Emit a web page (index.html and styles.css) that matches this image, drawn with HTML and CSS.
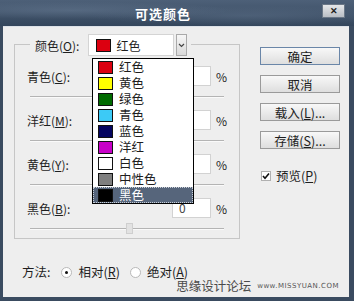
FILE: index.html
```html
<!DOCTYPE html>
<html lang="zh-CN">
<head>
<meta charset="UTF-8">
<title>可选颜色</title>
<link rel="stylesheet" href="styles.css">
</head>
<body>
  <div class="dialog">
    <div class="titlebar">
      <span class="title">可选颜色</span>
      <span class="close">✕</span>
    </div>
    <div class="client">
      <div class="left">
        <div class="group">
          <div class="group-head">
            <span class="head-label">颜色(<u>O</u>):</span>
            <div class="select">
              <span class="swatch red"></span>
              <span>红色</span>
            </div>
            <span class="select-btn">
              <svg width="7" height="5" viewBox="0 0 7 5"><path d="M1 1 L3.5 3.5 L6 1" fill="none" stroke="#444" stroke-width="1.2"/></svg>
            </span>
          </div>
          <div class="rows">
            <div class="row">
              <span class="label">青色(<u>C</u>):</span>
              <span class="field"></span>
              <span class="pct">%</span>
            </div>
            <div class="slider"><span class="thumb"></span></div>
            <div class="row">
              <span class="label">洋红(<u>M</u>):</span>
              <span class="field"></span>
              <span class="pct">%</span>
            </div>
            <div class="slider"><span class="thumb"></span></div>
            <div class="row">
              <span class="label">黄色(<u>Y</u>):</span>
              <span class="field"></span>
              <span class="pct">%</span>
            </div>
            <div class="slider"><span class="thumb"></span></div>
            <div class="row">
              <span class="label">黑色(<u>B</u>):</span>
              <span class="field">0</span>
              <span class="pct">%</span>
            </div>
            <div class="slider last"><span class="thumb"></span></div>
          </div>
        </div>
        <div class="method">
          <span class="method-label">方法:</span>
          <span class="radio checked"></span>
          <span class="radio-text">相对(<u>R</u>)</span>
          <span class="radio"></span>
          <span class="radio-text">绝对(<u>A</u>)</span>
        </div>
      </div>

      <div class="right">
        <div class="btn default">确定</div>
        <div class="btn">取消</div>
        <div class="btn gap">载入(<u>L</u>)...</div>
        <div class="btn">存储(<u>S</u>)...</div>
        <div class="check-row">
          <span class="checkbox">
            <svg width="8" height="8" viewBox="0 0 8 8"><path d="M1 4 L3 6.2 L7 1.5" fill="none" stroke="#111" stroke-width="1.6"/></svg>
          </span>
          <span>预览(<u>P</u>)</span>
        </div>
      </div>

      <!-- open dropdown list -->
      <ul class="list">
        <li><span class="swatch red"></span>红色</li>
        <li><span class="swatch yellow"></span>黄色</li>
        <li><span class="swatch green"></span>绿色</li>
        <li><span class="swatch cyan"></span>青色</li>
        <li><span class="swatch blue"></span>蓝色</li>
        <li><span class="swatch magenta"></span>洋红</li>
        <li><span class="swatch white"></span>白色</li>
        <li><span class="swatch neutral"></span>中性色</li>
        <li class="active"><span class="swatch black"></span>黑色</li>
      </ul>

      <div class="watermark">
        <span>思缘设计论坛</span>
        <small>www.MISSYUAN.COM</small>
      </div>
    </div>
  </div>
</body>
</html>
```

FILE: styles.css
```css
body {
  margin: 0;
  font-family: "Noto Sans CJK SC", "Liberation Sans", sans-serif;
  font-size: 12px;
  color: #1e1e1e;
}

u {
  text-decoration: underline;
  text-underline-offset: 1px;
}

.dialog {
  width: 354px;
  height: 301px;
  background: #3a4b60;
  display: flex;
  flex-direction: column;
}

.titlebar {
  height: 26px;
  display: flex;
  align-items: center;
  justify-content: center;
  position: relative;
  background:
    radial-gradient(ellipse at 20% 40%, rgba(120, 140, 165, 0.35), transparent 40%),
    radial-gradient(ellipse at 70% 60%, rgba(110, 130, 155, 0.3), transparent 45%),
    linear-gradient(#4d6078, #34465c);
}

.title {
  color: #fff;
  font-weight: bold;
  font-size: 13px;
  margin-right: 28px;
  letter-spacing: 1px;
}

.close {
  position: absolute;
  right: 9px;
  top: 4px;
  width: 21px;
  height: 12px;
  line-height: 12px;
  text-align: center;
  font-size: 9px;
  font-weight: bold;
  color: #222;
  background: linear-gradient(#e4e6e9, #b9bec5);
  border: 1px solid #6a7787;
}

.client {
  flex: 1;
  margin: 0 5px 4px 3px;
  background: #eeeeee;
  border-top: 1px solid #dde2e8;
  position: relative;
  display: flex;
  padding: 17px 0 0 11px;
}

.left {
  width: 226px;
}

.group {
  height: 195px;
  box-sizing: border-box;
  border: 1px solid #c6c6c6;
  padding: 0 11px 0 12px;
}

.group-head {
  display: flex;
  align-items: center;
  height: 22px;
  margin: -11px 0 0 3px;
  padding: 0 4px 0 5px;
  width: fit-content;
  background: #eeeeee;
}

.head-label {
  margin-right: 9px;
}

.select {
  width: 86px;
  height: 22px;
  box-sizing: border-box;
  background: #fff;
  border: 1px solid #d4d4d4;
  display: flex;
  align-items: center;
  gap: 5px;
  padding-left: 7px;
}

.select-btn {
  width: 11px;
  height: 22px;
  margin-left: 2px;
  box-sizing: border-box;
  border: 1px solid #a9a9a9;
  background: linear-gradient(#f6f6f6, #d9d9d9);
  display: flex;
  align-items: center;
  justify-content: center;
}

.swatch {
  display: inline-block;
  width: 15px;
  height: 13px;
  box-sizing: border-box;
  border: 1px solid #111;
}

.red { background: #dc0010; }
.yellow { background: #ffff00; }
.green { background: #006b00; }
.cyan { background: #3ccaf6; }
.blue { background: #050560; }
.magenta { background: #c800c8; }
.white { background: #fff; }
.neutral { background: #7f7f7f; }
.black { background: #000; }

.rows {
  margin-top: 10px;
}

.row {
  display: flex;
  align-items: center;
  height: 20px;
}

.label {
  margin-right: auto;
}

.field {
  width: 39px;
  height: 20px;
  box-sizing: border-box;
  background: #fff;
  border: 1px solid #d2d2d2;
  padding-left: 6px;
  line-height: 18px;
  color: #444;
}

.pct {
  margin-left: 5px;
  width: 12px;
}

.slider {
  position: relative;
  height: 0;
  margin: 10px 4px 12px 3px;
  border-top: 1px solid #b4b4b4;
  border-bottom: 1px solid #fafafa;
}

.slider.last {
  margin-bottom: 0;
}

.thumb {
  position: absolute;
  left: 96px;
  top: -6px;
  width: 7px;
  height: 11px;
  box-sizing: border-box;
  background: #e2e2e2;
  border: 1px solid #cfcfcf;
}

.method {
  display: flex;
  align-items: center;
  height: 14px;
  line-height: 14px;
  margin-top: 26px;
  padding-left: 8px;
  font-size: 12.5px;
}

.method-label {
  margin-right: 11px;
}

.radio {
  width: 9px;
  height: 9px;
  border-radius: 50%;
  border: 1px solid #b8b8b8;
  background: #fff;
  position: relative;
  margin-right: 6px;
}

.radio.checked::after {
  content: "";
  position: absolute;
  left: 3px;
  top: 3px;
  width: 3px;
  height: 3px;
  border-radius: 50%;
  background: #111;
}

.radio-text {
  margin-right: 10px;
}

.right {
  width: 80px;
  margin-left: 20px;
  padding-top: 3px;
}

.btn {
  height: 18px;
  line-height: 17px;
  text-align: center;
  box-sizing: border-box;
  border: 1px solid #9a9a9a;
  background: linear-gradient(#f8f8f8, #dedede);
  font-size: 12.5px;
  margin-bottom: 10px;
}

.btn.default {
  border-color: #6a86a8;
}

.btn.gap {
  margin-top: 6px;
}

.check-row {
  display: flex;
  align-items: center;
  gap: 5px;
  margin-top: 17px;
  padding-left: 1px;
  font-size: 12.5px;
}

.checkbox {
  width: 10px;
  height: 10px;
  box-sizing: border-box;
  border: 1px solid #b0b0b0;
  background: #fff;
  display: flex;
  align-items: center;
  justify-content: center;
}

.list {
  position: absolute;
  left: 89px;
  top: 31px;
  width: 100px;
  margin: 0;
  padding: 0;
  list-style: none;
  background: #fff;
  border: 1px solid #000;
}

.list li {
  height: 16px;
  line-height: 16px;
  display: flex;
  align-items: center;
  gap: 6px;
  padding-left: 5px;
  font-size: 12.5px;
}

.list li.active {
  background: #56657b;
  color: #fff;
  outline: 1px dotted #c9cfd8;
  outline-offset: -1px;
}

.watermark {
  position: absolute;
  right: 10px;
  bottom: 4px;
  display: flex;
  align-items: center;
  gap: 6px;
  height: 14px;
  line-height: 14px;
  color: #4a4a4a;
  font-size: 12.5px;
}

.watermark small {
  font-family: "DejaVu Sans", sans-serif;
  font-size: 7px;
  letter-spacing: 0.5px;
  color: #555;
}
```
